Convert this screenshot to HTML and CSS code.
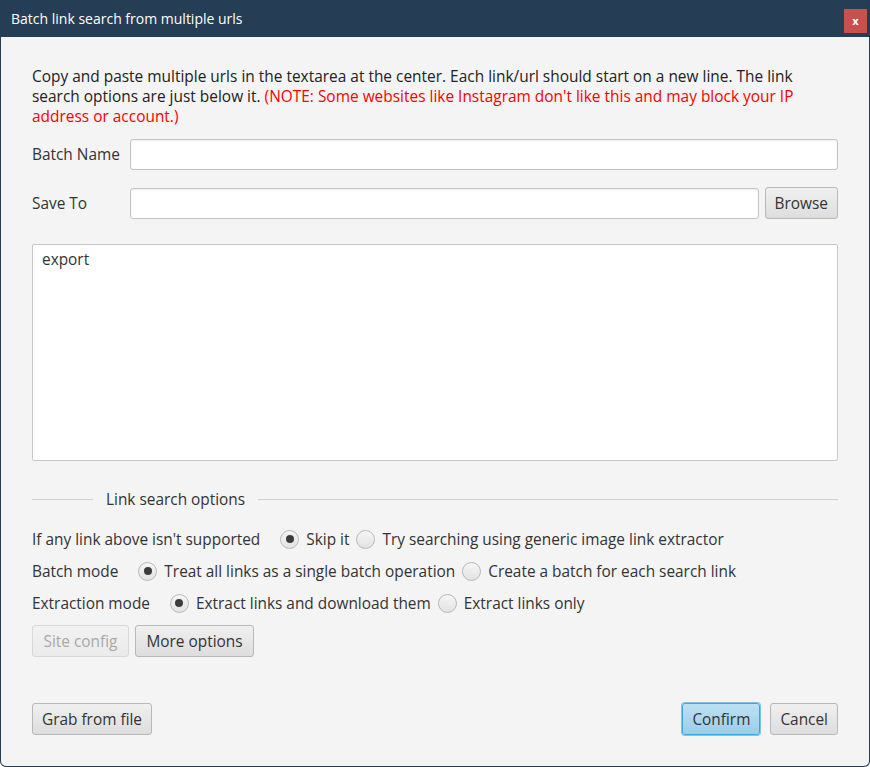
FILE: index.html
```html
<!DOCTYPE html>
<html>
<head>
<meta charset="utf-8">
<link rel="stylesheet" href="styles.css">
</head>
<body>
<div class="window">
  <div class="titlebar">
    <span class="title">Batch link search from multiple urls</span>
    <span class="close">x</span>
  </div>
  <div class="content">
    <p class="intro">Copy and paste multiple urls in the textarea at the center. Each link/url should start on a new line. The link search options are just below it. <span class="warn">(NOTE: Some websites like Instagram don't like this and may block your IP address or account.)</span></p>
    <div class="field">
      <label class="lbl">Batch Name</label>
      <div class="input"></div>
    </div>
    <div class="field">
      <label class="lbl">Save To</label>
      <div class="input"></div>
      <button class="btn">Browse</button>
    </div>
    <div class="textarea">export</div>
    <div class="sep">
      <span class="line short"></span>
      <span class="sep-label">Link search options</span>
      <span class="line"></span>
    </div>
    <div class="opt-row">
      <span class="opt-lbl">If any link above isn't supported</span>
      <span class="radio on"></span><span class="rtext">Skip it</span>
      <span class="radio"></span><span class="rtext">Try searching using generic image link extractor</span>
    </div>
    <div class="opt-row">
      <span class="opt-lbl">Batch mode</span>
      <span class="radio on"></span><span class="rtext">Treat all links as a single batch operation</span>
      <span class="radio"></span><span class="rtext">Create a batch for each search link</span>
    </div>
    <div class="opt-row">
      <span class="opt-lbl">Extraction mode</span>
      <span class="radio on"></span><span class="rtext">Extract links and download them</span>
      <span class="radio"></span><span class="rtext">Extract links only</span>
    </div>
    <div class="btn-row">
      <button class="btn wide disabled">Site config</button>
      <button class="btn wide">More options</button>
    </div>
    <div class="footer">
      <button class="btn">Grab from file</button>
      <div class="spacer"></div>
      <button class="btn primary">Confirm</button>
      <button class="btn">Cancel</button>
    </div>
  </div>
</div>
</body>
</html>
```
FILE: styles.css
```css
* { box-sizing: border-box; }
html, body { margin: 0; padding: 0; }
body {
  font-family: "Open Sans", "Noto Sans", sans-serif;
  font-size: 15.4px;
  color: #333;
  background: #fff;
}
.window {
  width: 870px;
  height: 767px;
  border: 1px solid #243c54;
  border-top: none;
  border-radius: 0 0 6px 6px;
  background: #f4f4f4;
  display: flex;
  flex-direction: column;
  overflow: hidden;
}
.titlebar {
  height: 37px;
  background: #253d55;
  display: flex;
  align-items: center;
  padding-left: 10px;
  position: relative;
  flex: none;
}
.title {
  color: #fff;
  font-size: 14px;
}
.close {
  position: absolute;
  right: 2px;
  top: 9px;
  width: 23px;
  height: 24px;
  background: #c9504f;
  color: #fff;
  font-family: "DejaVu Sans", sans-serif;
  font-weight: bold;
  font-size: 10px;
  display: flex;
  align-items: center;
  justify-content: center;
}
.content {
  flex: 1;
  padding: 29px 31px 31px 31px;
  display: flex;
  flex-direction: column;
}
.intro {
  margin: 0 0 13px 0;
  line-height: 20px;
  font-size: 15.45px;
  color: #222;
}
.warn { color: #ff0000; }
.field {
  display: flex;
  align-items: center;
  gap: 6px;
  margin-bottom: 17px;
}
.lbl {
  width: 92px;
  flex: none;
  color: #333;
}
.input {
  flex: 1;
  height: 31px;
  background: #fff;
  border: 1px solid #c4c4c4;
  border-radius: 3px;
  box-shadow: inset 0 1px 2px rgba(0,0,0,0.08);
}
.btn {
  font-family: inherit;
  font-size: 15.4px;
  color: #333;
  height: 32px;
  padding: 0 9px;
  border: 1px solid #b8b8b8;
  border-radius: 3px;
  background: linear-gradient(#f0f0f0, #dddddd);
  flex: none;
}
.btn.wide { padding: 0 10.5px; }
.btn.disabled {
  color: #a8a8a8;
  border-color: #d8d8d8;
  background: linear-gradient(#f2f2f2, #eaeaea);
}
.btn.primary {
  border-color: #39a8e2;
  background: linear-gradient(#bde0f2, #9cccea);
  box-shadow: 0 0 0 1px #7cc4ec;
}
.textarea {
  margin-top: 8px;
  height: 217px;
  background: #fff;
  border: 1px solid #c8c8c8;
  border-radius: 2px;
  padding: 4px 9px;
  color: #333;
}
.sep {
  display: flex;
  align-items: center;
  margin-top: 28px;
  margin-bottom: 13px;
}
.line {
  flex: 1;
  height: 1px;
  background: #cfcfcf;
}
.line.short { flex: none; width: 61px; }
.sep-label { padding: 0 13px; color: #333; }
.opt-row {
  display: flex;
  align-items: center;
  height: 32px;
}
.opt-lbl { margin-right: 20px; }
.radio {
  width: 19px;
  height: 19px;
  border-radius: 50%;
  border: 1px solid #b9b9b9;
  background: linear-gradient(#f6f6f6, #e2e2e2);
  position: relative;
  margin-right: 7px;
  flex: none;
}
.radio.on::after {
  content: "";
  position: absolute;
  left: 4.5px;
  top: 4.5px;
  width: 8px;
  height: 8px;
  border-radius: 50%;
  background: #3c3c3c;
}
.rtext { margin-right: 7px; }
.btn-row {
  display: flex;
  gap: 6px;
  margin-top: 6px;
}
.footer {
  margin-top: auto;
  display: flex;
  gap: 10px;
  align-items: center;
}
.spacer { flex: 1; }
```
